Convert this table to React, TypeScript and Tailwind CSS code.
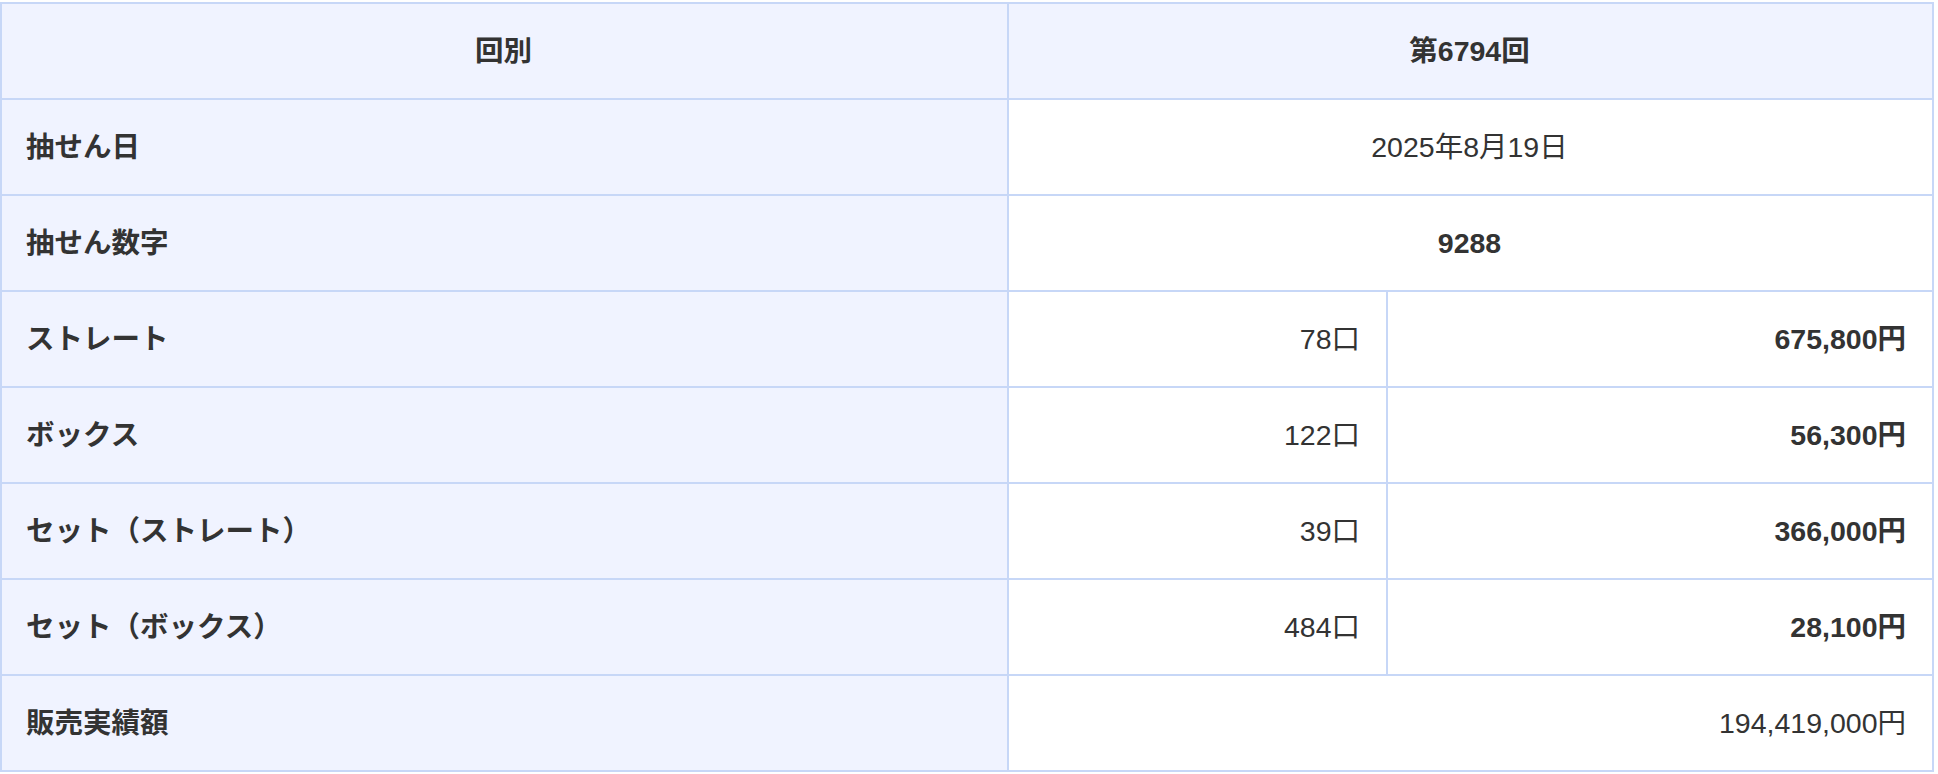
const rows = [
  { label: "ストレート", count: "78口", prize: "675,800円" },
  { label: "ボックス", count: "122口", prize: "56,300円" },
  { label: "セット（ストレート）", count: "39口", prize: "366,000円" },
  { label: "セット（ボックス）", count: "484口", prize: "28,100円" },
];

const cell = "border-2 border-[#c7d7f7] h-[96px] pl-6 pr-[26px] py-0";
const head = `${cell} bg-[#f0f3ff] font-bold`;

export default function App() {
  return (
    <div className="bg-white pt-[2px] text-[#333] text-[28.5px] leading-[1.5] font-['Liberation_Sans','Noto_Sans_CJK_JP',sans-serif]">
      <table className="w-[1932px] table-fixed border-collapse">
        <colgroup>
          <col className="w-[1007px]" />
          <col className="w-[379px]" />
          <col className="w-[546px]" />
        </colgroup>
        <tbody>
          <tr>
            <th className={`${head} text-center`}>回別</th>
            <th className={`${head} text-center`} colSpan={2}>
              第6794回
            </th>
          </tr>
          <tr>
            <th className={`${head} text-left`}>抽せん日</th>
            <td className={`${cell} text-center`} colSpan={2}>
              2025年8月19日
            </td>
          </tr>
          <tr>
            <th className={`${head} text-left`}>抽せん数字</th>
            <td className={`${cell} text-center font-bold`} colSpan={2}>
              9288
            </td>
          </tr>
          {rows.map((r) => (
            <tr key={r.label}>
              <th className={`${head} text-left`}>{r.label}</th>
              <td className={`${cell} text-right`}>{r.count}</td>
              <td className={`${cell} text-right font-bold`}>{r.prize}</td>
            </tr>
          ))}
          <tr>
            <th className={`${head} text-left`}>販売実績額</th>
            <td className={`${cell} text-right`} colSpan={2}>
              194,419,000円
            </td>
          </tr>
        </tbody>
      </table>
    </div>
  );
}
